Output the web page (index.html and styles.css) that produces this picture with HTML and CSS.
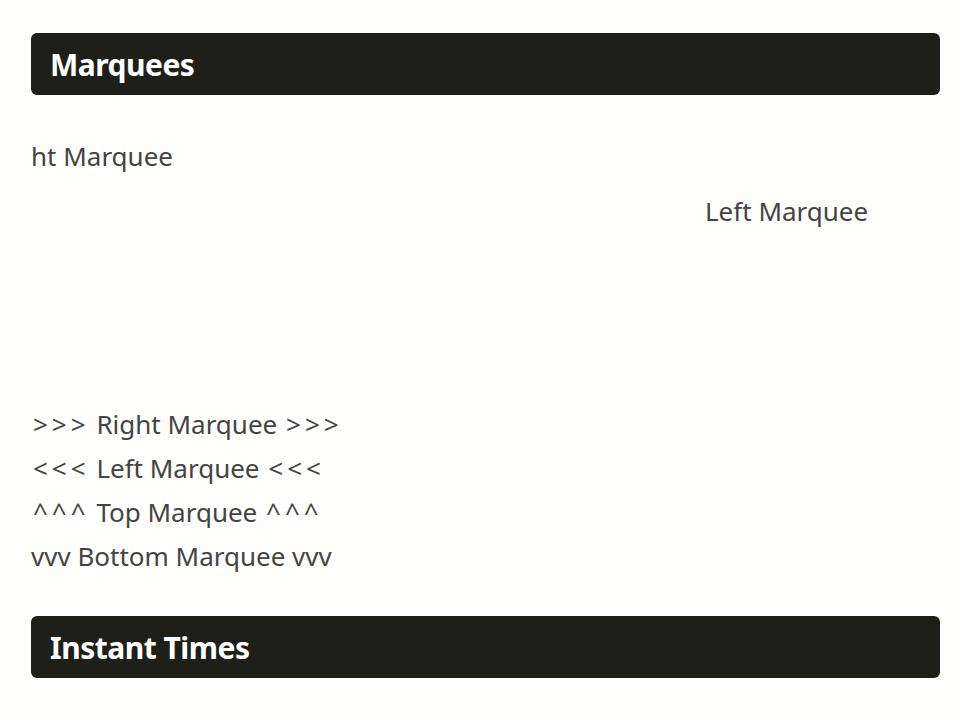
FILE: index.html
```html
<!DOCTYPE html>
<html lang="en">
<head>
  <meta charset="UTF-8">
  <title>Marquees</title>
  <link rel="stylesheet" href="styles.css">
</head>
<body>
  <div class="container">
    <div class="section-header">
      <h2>Marquees</h2>
    </div>

    <!-- snapshot of the scrolling marquees mid-animation -->
    <div class="marquee marquee-right">
      <span>ht Marquee</span>
    </div>
    <div class="marquee marquee-left">
      <span>Left Marquee</span>
    </div>
    <div class="marquee marquee-vertical"></div>

    <ul class="marquee-list">
      <li><span class="arrows">&gt;&gt;&gt;</span> Right Marquee <span class="arrows">&gt;&gt;&gt;</span></li>
      <li><span class="arrows">&lt;&lt;&lt;</span> Left Marquee <span class="arrows">&lt;&lt;&lt;</span></li>
      <li><span class="arrows">^^^</span> Top Marquee <span class="arrows">^^^</span></li>
      <li>vvv Bottom Marquee vvv</li>
    </ul>

    <div class="section-header">
      <h2>Instant Times</h2>
    </div>
  </div>
</body>
</html>
```
FILE: styles.css
```css
body {
  font-family: 'Noto Sans', 'Open Sans', sans-serif;
  margin: 0;
  padding: 33px 20px 0 31px;
  background: #fefefc;
  color: #444;
}

.container {
  max-width: 909px;
}

.section-header {
  background: #1f1f1a;
  border-radius: 6px;
  height: 62px;
  display: flex;
  align-items: center;
  padding: 0 19px;
}

.section-header h2 {
  margin: 0;
  color: #fff;
  font-size: 30px;
  font-weight: bold;
  letter-spacing: -0.5px;
}

.marquee {
  overflow: hidden;
  white-space: nowrap;
  font-size: 26px;
  line-height: 44px;
}

.marquee-right {
  margin-top: 39px;
}

.marquee-left {
  margin-top: 11px;
}

.marquee-left span {
  display: inline-block;
  padding-left: 674px;
}

.marquee-vertical {
  height: 169px;
}

.marquee-list {
  list-style: none;
  margin: 0 0 38px;
  padding: 0;
  font-size: 26px;
  line-height: 44px;
}

.arrows {
  letter-spacing: 4px;
  padding-left: 2px;
}
```
